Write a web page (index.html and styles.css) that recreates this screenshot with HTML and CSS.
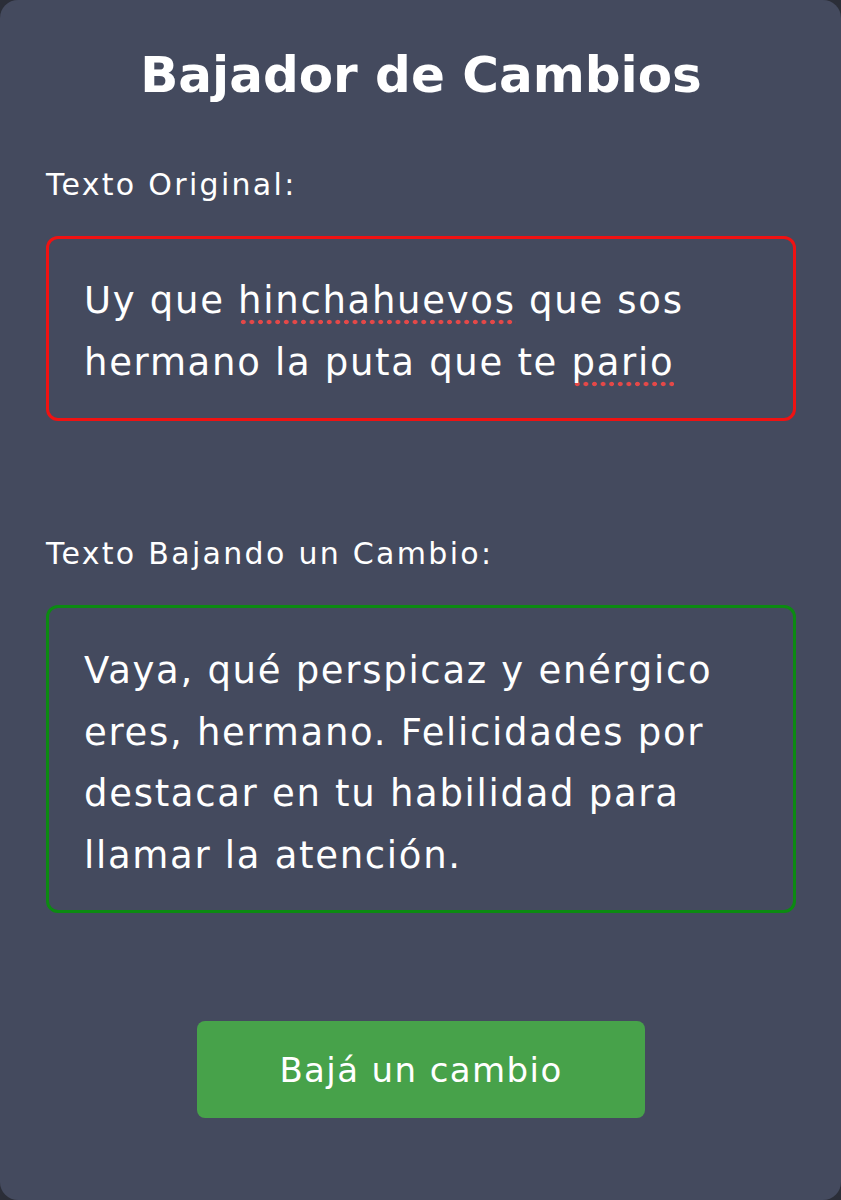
FILE: index.html
```html
<!DOCTYPE html>
<html lang="es">
<head>
    <meta charset="UTF-8">
    <meta name="viewport" content="width=device-width, initial-scale=1.0">
    <title>Bajador de Cambios</title>
    <link rel="stylesheet" href="styles.css">
</head>
<body>

    <div class="card">
        <h1>Bajador de Cambios</h1>

        <div class="field">
            <label for="original">Texto Original:</label>
            <div id="original" class="text-box original">
                Uy que <span class="typo">hinchahuevos</span> que sos hermano la puta que te <span class="typo">pario</span>
            </div>
        </div>

        <div class="field last">
            <label for="bajado">Texto Bajando un Cambio:</label>
            <div id="bajado" class="text-box result">
                Vaya, qué perspicaz y enérgico eres, hermano. Felicidades por destacar en tu habilidad para llamar la atención.
            </div>
        </div>

        <div class="actions">
            <button>Bajá un cambio</button>
        </div>
    </div>

</body>
</html>
```

FILE: styles.css
```css
body {
    font-family: 'DejaVu Sans', 'Noto Sans', sans-serif;
    background-color: #2b2e38;
    margin: 0;
}

.card {
    height: 1200px;
    box-sizing: border-box;
    background-color: #444a5e;
    border-radius: 18px;
    padding: 40px 45px 0 46px;
    color: #ffffff;
}

h1 {
    margin: 0 0 55px;
    text-align: center;
    font-size: 50px;
    font-weight: 700;
    line-height: 70px;
}

.field {
    margin-bottom: 113px;
}

.field.last {
    margin-bottom: 108px;
}

label {
    display: block;
    margin-bottom: 31px;
    font-size: 30px;
    line-height: 40px;
    letter-spacing: 2.3px;
}

.text-box {
    padding: 31px 35px 25px;
    font-size: 37px;
    line-height: 61.5px;
    letter-spacing: 1.7px;
    border: 3px solid;
    border-radius: 12px;
}

.result {
    padding-top: 32px;
    padding-bottom: 24px;
}

.original {
    border-color: #f01212;
}

.result {
    border-color: #0c8a12;
}

/* spellcheck squiggle */
.typo {
    padding-bottom: 3px;
    background-image: radial-gradient(circle, #e44848 2px, transparent 2.6px);
    background-size: 8.6px 6px;
    background-position: 1px 100%;
    background-repeat: repeat-x;
}

.actions {
    display: flex;
    justify-content: center;
}

button {
    width: 448px;
    height: 97px;
    font-family: inherit;
    font-size: 34px;
    letter-spacing: 1.4px;
    color: white;
    background-color: #47a24a;
    border: none;
    border-radius: 8px;
    cursor: pointer;
}
```
